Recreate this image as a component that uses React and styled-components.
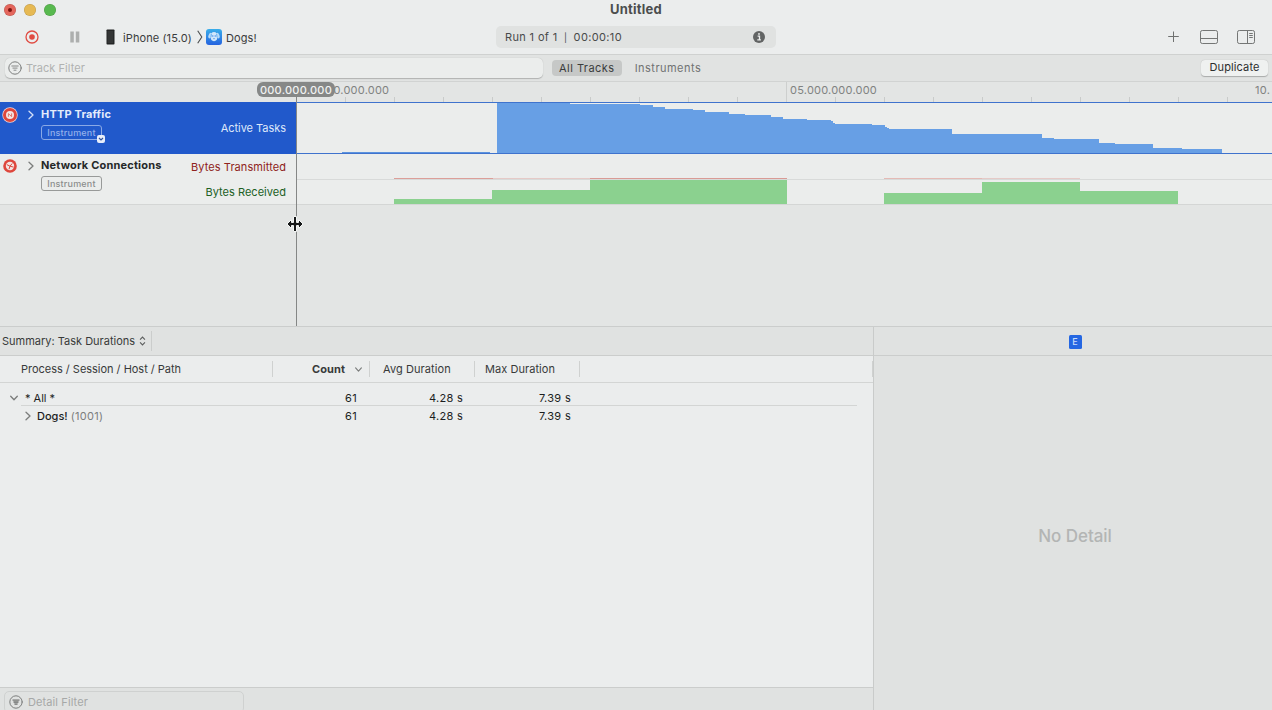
import React from "react";
import styled, { createGlobalStyle, css } from "styled-components";

const Global = createGlobalStyle`
  *, *::before, *::after { box-sizing: border-box; }
  html, body, #root { height: 100%; }
  body {
    margin: 0;
    overflow: hidden;
    font-family: Inter, "Liberation Sans", sans-serif;
    font-size: 11px;
    color: #3c3e3e;
    background: #ebeded;
  }
  svg { display: block; flex: none; }
`;

const Window = styled.div`
  width: 1272px;
  height: 710px;
  display: flex;
  flex-direction: column;
  overflow: hidden;
  white-space: nowrap;
  background: #ebeded;
`;

/* Title bar */
const TitleBar = styled.header`
  height: 20px;
  flex: none;
  display: grid;
  grid-template-columns: 1fr auto 1fr;
  align-items: center;
  padding-left: 4px;
`;
const Lights = styled.div`
  display: flex;
  gap: 8px;
`;
const Light = styled.span`
  width: 12px;
  height: 12px;
  border-radius: 50%;
  background: ${(p) => p.$color};
  box-shadow: inset 0 0 0 0.5px rgba(0, 0, 0, 0.18);
  display: grid;
  place-items: center;
`;
const LightDot = styled.span`
  width: 4px;
  height: 4px;
  border-radius: 50%;
  background: #7c1511;
`;
const Title = styled.h1`
  margin: 0 4px 1px 0;
  font-size: 13px;
  line-height: 17px;
  font-weight: 700;
  letter-spacing: 0.24px;
  color: #4c4e4e;
`;

/* Toolbar */
const Toolbar = styled.div`
  height: 35px;
  flex: none;
  display: flex;
  align-items: center;
  border-bottom: 1px solid #cfd1d0;
  padding: 0 16px 0 25px;
`;
const TransportButtons = styled.div`
  width: 81px;
  display: flex;
  align-items: center;
  gap: 31px;
`;
const Target = styled.div`
  width: 390px;
  display: flex;
  align-items: center;
  font-size: 11px;
  letter-spacing: 0.1px;
  line-height: 16px;
  color: #3a3c3c;
`;
const DeviceName = styled.span`
  width: 74px;
  margin-left: 8px;
  padding-top: 1px;
`;
const AppName = styled.span`
  margin-left: 4px;
  padding-top: 1px;
`;
const RunStatus = styled.div`
  width: 280px;
  height: 22px;
  display: flex;
  align-items: center;
  justify-content: space-between;
  padding: 0 11px 0 9px;
  border-radius: 5px;
  background: #e0e2e1;
  font-size: 11px;
  letter-spacing: 0.36px;
  color: #484a4a;
`;
const RunText = styled.span`
  display: flex;
  align-items: center;
`;
const Pipe = styled.span`
  width: 16px;
  text-align: center;
  font-size: 9px;
`;
const ToolbarActions = styled.div`
  margin-left: auto;
  display: flex;
  align-items: center;
`;
const ActionIcon = styled.span`
  margin-left: ${(p) => p.$gap || 0}px;
`;

/* Filter bar */
const FilterBar = styled.div`
  height: 27px;
  flex: none;
  display: flex;
  align-items: center;
  padding: 0 4px 1px 5px;
  background: #e1e3e2;
  border-bottom: 1px solid #d1d3d2;
`;
const TrackFilter = styled.div`
  width: 538px;
  height: 20px;
  display: flex;
  align-items: center;
  gap: 4px;
  padding-left: 3px;
  border-radius: 5px;
  background: #ebedec;
  box-shadow: 0 0.5px 1px rgba(0, 0, 0, 0.22);
  font-size: 11px;
  letter-spacing: 0.05px;
  color: #b0b2b1;
`;
const ScopeTab = styled.span`
  height: 16px;
  line-height: 16px;
  padding: 0 7px;
  margin-left: ${(p) => p.$gap}px;
  border-radius: 4px;
  font-size: 11px;
  letter-spacing: 0.47px;
  color: #707272;
  ${(p) =>
    p.$active &&
    css`
      background: #c6c8c7;
      color: #3a3c3c;
    `}
`;
const DuplicateButton = styled.span`
  margin-left: auto;
  width: 67px;
  height: 16px;
  line-height: 15px;
  text-align: center;
  border-radius: 4px;
  background: #eff1f0;
  box-shadow: 0 0.5px 1px rgba(0, 0, 0, 0.25);
  font-size: 11px;
  letter-spacing: 0.12px;
  color: #2c2e2e;
`;

/* Timeline */
const Timeline = styled.section`
  position: relative;
  height: 244px;
  flex: none;
  background: #e3e5e4;
`;
const Ruler = styled.div`
  height: 20px;
  display: flex;
  padding-left: 297px;
  overflow: hidden;
`;
const RulerSpan = styled.div`
  width: 490px;
  height: 20px;
  flex: none;
  display: flex;
  flex-direction: column;
  justify-content: space-between;
  border-right: 1px solid #cdcfce;
`;
const RulerLabel = styled.span`
  height: 15px;
  line-height: 16px;
  padding-left: ${(p) => p.$inset}px;
  font-size: 11px;
  letter-spacing: 0.22px;
  color: #808281;
`;
const Ticks = styled.div`
  display: flex;
  height: 5px;
`;
const Tick = styled.i`
  width: 49px;
  height: 5px;
  flex: none;
  border-right: 1px solid #c9cbca;
  &:last-child { border-color: transparent; }
`;
const EndLabel = styled.span`
  position: absolute;
  top: 0;
  left: 1255px;
  line-height: 16px;
  font-size: 11px;
  letter-spacing: 0.32px;
  color: #808281;
`;
const Track = styled.div`
  display: flex;
  height: ${(p) => p.$height}px;
`;
const TrackHead = styled.div`
  width: 296px;
  flex: none;
  display: flex;
  padding-right: 10px;
  background: ${(p) => (p.$selected ? "#2159cb" : "#ebedec")};
  color: ${(p) => (p.$selected ? "#e4ecfb" : "#262828")};
  ${(p) => !p.$selected && "border-bottom: 1px solid #d4d6d5;"}
`;
const Badge = styled.span`
  width: 27px;
  padding: ${(p) => p.$top}px 0 0 2px;
`;
const Names = styled.div`
  display: flex;
  flex-direction: column;
  align-items: flex-start;
  padding-top: ${(p) => p.$top}px;
`;
const TrackName = styled.strong`
  height: 16px;
  line-height: 15px;
  font-size: 11px;
  font-weight: 700;
  letter-spacing: 0.18px;
`;
const NameCell = styled.div`
  width: 14px;
  padding-top: ${(p) => p.$top}px;
`;
const KindTag = styled.span`
  position: relative;
  width: 61px;
  height: 15px;
  line-height: 13px;
  margin-top: 2px;
  text-align: center;
  font-size: 9px;
  font-weight: 500;
  letter-spacing: 0.2px;
  border: 1px solid ${(p) => (p.$selected ? "#8aa9e6" : "#989a99")};
  border-radius: 3px;
  color: ${(p) => (p.$selected ? "#93b0ea" : "#8b8d8c")};
`;
const TagMenu = styled.span`
  position: absolute;
  right: -4px;
  bottom: -4px;
  width: 8px;
  height: 8px;
  border-radius: 2px;
  background: #e8eefa;
`;
const Series = styled.div`
  margin-left: auto;
  display: flex;
  flex-direction: column;
  align-items: flex-end;
`;
const SeriesName = styled.span`
  height: ${(p) => p.$height}px;
  line-height: ${(p) => p.$height}px;
  font-size: 11px;
  letter-spacing: ${(p) => p.$spacing}px;
  color: ${(p) => p.$color};
`;
const Lane = styled.div`
  flex: 1;
  background: #ebedec;
  overflow: hidden;
`;
const Playhead = styled.div`
  position: absolute;
  top: 14px;
  left: 296px;
  width: 1px;
  height: 230px;
  background: #858786;
`;
const PlayheadTime = styled.span`
  position: absolute;
  top: 0;
  left: 257px;
  width: 78px;
  height: 15px;
  line-height: 16px;
  text-align: center;
  border-radius: 6px;
  background: #868887;
  color: #f1f3f2;
  font-size: 11px;
  font-weight: 500;
  letter-spacing: 0.25px;
`;
const ResizeCursor = styled.svg`
  position: absolute;
  top: 133px;
  left: 286px;
`;

/* Lower panes */
const Lower = styled.div`
  flex: 1;
  display: flex;
  min-height: 0;
  border-top: 1px solid #cbcdcc;
`;
const DetailPane = styled.section`
  width: 873px;
  flex: none;
  display: flex;
  flex-direction: column;
`;
const PaneBar = styled.div`
  height: 29px;
  flex: none;
  display: flex;
  align-items: center;
  justify-content: ${(p) => (p.$center ? "center" : "flex-start")};
  background: #e0e2e1;
  border-bottom: 1px solid #cbcdcc;
`;
const SummaryMenu = styled.div`
  width: 152px;
  height: 20px;
  display: flex;
  align-items: center;
  justify-content: space-between;
  padding: 0 5px 0 2px;
  border-right: 1px solid #cbcdcc;
  font-size: 11px;
  color: #383a3a;
`;
const Columns = styled.div`
  display: grid;
  grid-template-columns: 273px 97px 105px 105px 293px;
  align-items: center;
  height: 27px;
  flex: none;
  border-bottom: 1px solid #d3d5d4;
`;
const ColumnHead = styled.div`
  height: 16px;
  display: flex;
  align-items: center;
  justify-content: space-between;
  padding: 0 7px 0 ${(p) => p.$inset}px;
  border-right: 1px solid #cfd1d0;
  font-size: 11px;
  font-weight: ${(p) => (p.$sorted ? 700 : 400)};
  letter-spacing: ${(p) => p.$spacing || 0}px;
  color: #383a3a;
`;
const Rows = styled.div`
  flex: 1;
  padding: 4px 16px 0 9px;
`;
const Row = styled.div`
  display: grid;
  grid-template-columns: 264px 84px 106px 108px 1fr;
  height: 18px;
  padding-top: ${(p) => p.$top}px;
  font-size: 11px;
  color: #1c1e1e;
`;
const RowRule = styled.hr`
  margin: 0 0 0 12px;
  height: 1px;
  border: 0;
  background: #d3d5d4;
`;
const PathCell = styled.div`
  display: flex;
  align-items: center;
  gap: ${(p) => p.$gap}px;
  padding-left: ${(p) => p.$indent}px;
  font-weight: ${(p) => p.$weight || 400};
`;
const Pid = styled.span`
  margin-left: -2px;
  font-weight: 400;
  letter-spacing: 0.3px;
  color: #7c7e7d;
`;
const NumberCell = styled.div`
  text-align: right;
  line-height: 16px;
  letter-spacing: 0.3px;
`;
const DetailFooter = styled.div`
  height: 23px;
  flex: none;
  padding: 3px 0 0 4px;
  border-top: 1px solid #cbcdcc;
  background: #e0e2e1;
`;
const DetailFilter = styled.div`
  width: 240px;
  height: 22px;
  display: flex;
  align-items: center;
  gap: 5px;
  padding-left: 4px;
  border: 1px solid #cfd1d0;
  border-radius: 5px;
  font-size: 11px;
  letter-spacing: 0.1px;
  color: #a6a8a7;
`;
const Inspector = styled.aside`
  flex: 1;
  display: flex;
  flex-direction: column;
  background: #e0e2e1;
  border-left: 1px solid #c9cbca;
`;
const InspectorTab = styled.span`
  width: 13px;
  height: 14px;
  line-height: 14px;
  margin: 2px 0 0 4px;
  text-align: center;
  border-radius: 1.5px;
  background: #2567e2;
  color: #c9dbfa;
  font-size: 9px;
  font-weight: 500;
`;
const EmptyDetail = styled.div`
  flex: 1;
  display: grid;
  place-items: center;
  padding: 6px 0 0 4px;
  font-size: 17px;
  font-weight: 500;
  letter-spacing: -0.05px;
  color: #b3b5b4;
`;

const Chevron = ({ down, size = 8, color = "#7b7d7c", width = 1.3 }) => (
  <svg width={size} height={size + 2} viewBox="0 0 8 10" fill="none" stroke={color} strokeWidth={width} strokeLinecap="round" strokeLinejoin="round">
    <path d={down ? "M0.7 3.2 L4 6.8 L7.3 3.2" : "M2 1.2 L6 5 L2 8.8"} />
  </svg>
);

const FilterIcon = ({ solid }) => (
  <svg width="14" height="14" viewBox="0 0 14 14" fill="none" stroke="#7c7e7d" strokeLinecap="round">
    <circle cx="7" cy="7" r="6.2" strokeWidth="1" />
    {solid && <path d="M3.8 4.7h6.4L8.2 9.7H5.8Z" fill="#a6a8a7" stroke="none" />}
    <path d="M3.8 5h6.4M4.9 7.1h4.2M6 9.2h2" strokeWidth={solid ? 1.1 : 0.9} />
  </svg>
);

const HttpBadge = () => (
  <svg width="16" height="16" viewBox="0 0 16 16">
    <circle cx="8" cy="8" r="7.7" fill="#f3d9d9" />
    <circle cx="8" cy="8" r="7" fill="#de463c" />
    <circle cx="8" cy="8" r="4" fill="#f3e4e2" />
    <path d="M6.4 9.8V6.6l3.200 3V6.400" fill="none" stroke="#de665c" strokeWidth="0.9" />
  </svg>
);

const NetworkBadge = () => (
  <svg width="16" height="16" viewBox="0 0 16 16">
    <circle cx="8" cy="8" r="6.8" fill="#de463c" />
    <circle cx="8" cy="8" r="4.2" fill="#f3e4e2" />
    <path d="M4.8 6.6 8 8.2l2.2-2.7M8 8.2 7 11.2M8 8.2l3.6 0.9" fill="none" stroke="#de463c" strokeWidth="1" />
  </svg>
);

const AppIcon = () => (
  <svg width="16" height="16" viewBox="0 0 16 16">
    <defs>
      <linearGradient id="dogs" x1="0" y1="0" x2="0" y2="1">
        <stop offset="0" stopColor="#3aaeea" />
        <stop offset="1" stopColor="#2563df" />
      </linearGradient>
    </defs>
    <rect width="16" height="16" rx="3" fill="url(#dogs)" />
    <ellipse cx="8" cy="7.600" rx="3.400" ry="4.600" fill="#d2e7fb" />
    <ellipse cx="4.100" cy="6.600" rx="1.600" ry="2.900" transform="rotate(24 4.100 6.600)" fill="#b9dcf9" />
    <ellipse cx="11.900" cy="6.600" rx="1.600" ry="2.900" transform="rotate(-24 11.900 6.600)" fill="#b9dcf9" />
    <path d="M5.400 5 4.900 8.300M10.600 5l0.500 3.300" stroke="#4f9fec" strokeWidth="0.7" />
    <circle cx="6.800" cy="7" r="0.700" fill="#3c86e4" />
    <circle cx="9.200" cy="7" r="0.700" fill="#3c86e4" />
    <path d="M7 9.200h2L8 10.400Z" fill="#3c86e4" />
  </svg>
);

/* Each step is [end x, top y] inside the lane, in pixels. */
const taskSteps = [
  [273, 1], [343, 2], [356, 3], [368, 5], [396, 7], [408, 7.5], [432, 10], [448, 11.7],
  [474, 12.5], [486, 15], [510, 17], [534, 17.6], [536, 19], [537.5, 20.5], [575, 22],
  [588, 22.7], [590, 24.5], [592, 26], [654.5, 27], [745, 32], [757, 36], [802, 37],
  [818, 41], [856, 42], [885, 46], [925.4, 47],
];
const taskPath =
  "M199.6 51V27H200.4V1" + taskSteps.map(([x, y]) => `V${y}H${x}`).join("") + "V51Z";

const received = [
  [97, 98, 45], [195, 98, 36], [293, 197, 26], [587, 98, 39], [685, 98, 28], [783, 98.4, 37],
];
const transmitted = [
  [97, 99, "#dc9f99"], [196, 97, "#e5cac7"], [293, 197, "#d99b95"], [587, 98, "#e4bab5"], [685, 98, "#e5cac7"],
];

const columns = [
  { label: "Process / Session / Host / Path", inset: 21, spacing: -0.02 },
  { label: "Count", inset: 39, sorted: true, spacing: 0.1 },
  { label: "Avg Duration", inset: 13, spacing: 0.08 },
  { label: "Max Duration", inset: 10, spacing: 0.06 },
  { label: "", inset: 0 },
];

export default function App() {
  return (
    <>
      <Global />
      <Window>
        <TitleBar>
          <Lights>
            <Light $color="#e4675d"><LightDot /></Light>
            <Light $color="#e6b953" />
            <Light $color="#58b94f" />
          </Lights>
          <Title>Untitled</Title>
          <span />
        </TitleBar>

        <Toolbar>
          <TransportButtons>
            <svg width="14" height="14" viewBox="0 0 14 14">
              <circle cx="7" cy="7" r="6" fill="none" stroke="#e04b42" strokeWidth="1.3" />
              <circle cx="7" cy="7" r="2.8" fill="#e04b42" />
            </svg>
            <svg width="10" height="12" viewBox="0 0 10 12" fill="#adafae">
              <rect x="0.3" y="0.5" width="3.5" height="11" />
              <rect x="5.8" y="0.5" width="3.5" height="11" />
            </svg>
          </TransportButtons>
          <Target>
            <svg width="9" height="16" viewBox="0 0 9 16">
              <rect x="0.5" y="0.5" width="8" height="15" rx="0.8" fill="#222424" />
              <rect x="1.5" y="1.8" width="5.8" height="12.4" fill="#343636" />
            </svg>
            <DeviceName>iPhone (15.0)</DeviceName>
            <svg width="9" height="14" viewBox="0 0 9 14" fill="none" stroke="#4c4e4e" strokeWidth="1.1">
              <path d="M0.7 0.7 4.8 7 0.7 13.3" />
            </svg>
            <AppIcon />
            <AppName>Dogs!</AppName>
          </Target>
          <RunStatus>
            <RunText>Run 1 of 1<Pipe>|</Pipe>00:00:10</RunText>
            <svg width="12" height="12" viewBox="0 0 12 12">
              <circle cx="6" cy="6" r="6" fill="#626464" />
              <path d="M4.6 5.1h1.9v3.6M4.3 8.8h3.6" fill="none" stroke="#eceeed" strokeWidth="1.3" />
              <circle cx="6" cy="2.9" r="0.95" fill="#eceeed" />
            </svg>
          </RunStatus>
          <ToolbarActions>
            <ActionIcon>
              <svg width="12" height="12" viewBox="0 0 12 12" stroke="#6f7170">
                <path d="M5.5 0.5v10.5M0.200 5.500h10.600" />
              </svg>
            </ActionIcon>
            <ActionIcon $gap={20}>
              <svg width="19" height="15" viewBox="0 0 19 15" fill="none" stroke="#747675">
                <rect x="0.5" y="0.5" width="17" height="13" rx="1.8" />
                <path d="M1 8.500h17" />
              </svg>
            </ActionIcon>
            <ActionIcon $gap={18}>
              <svg width="19" height="15" viewBox="0 0 19 15" fill="none" stroke="#747675">
                <rect x="0.5" y="0.5" width="17" height="13" rx="1.8" />
                <path d="M10.500 1v13" />
                <path d="M12.2 3.500h3.600M12.2 5.500h3.600M12.2 7.500h3.600" />
              </svg>
            </ActionIcon>
          </ToolbarActions>
        </Toolbar>

        <FilterBar>
          <TrackFilter><FilterIcon />Track Filter</TrackFilter>
          <ScopeTab $active $gap={9}>All Tracks</ScopeTab>
          <ScopeTab $gap={6}>Instruments</ScopeTab>
          <DuplicateButton>Duplicate</DuplicateButton>
        </FilterBar>

        <Timeline>
          <Ruler>
            {[["00.000.000.000", 5], ["05.000.000.000", 3]].map(([label, inset]) => (
              <RulerSpan key={label}>
                <RulerLabel $inset={inset}>{label}</RulerLabel>
                <Ticks>{Array.from({ length: 10 }, (_, i) => <Tick key={i} />)}</Ticks>
              </RulerSpan>
            ))}
          </Ruler>
          <EndLabel>10.</EndLabel>

          <Track $height={52}>
            <TrackHead $selected>
              <Badge $top={5}><HttpBadge /></Badge>
              <NameCell $top={8}><Chevron color="#d5e0f8" /></NameCell>
              <Names $top={5}>
                <TrackName>HTTP Traffic</TrackName>
                <KindTag $selected>
                  Instrument
                  <TagMenu>
                    <svg width="8" height="8" viewBox="0 0 8 8" fill="none" stroke="#31549c" strokeWidth="1.2">
                      <path d="M2 3l2 2 2-2" />
                    </svg>
                  </TagMenu>
                </KindTag>
              </Names>
              <Series><SeriesName $height={52} $color="#dfe8fa" $spacing={-0.03}>Active Tasks</SeriesName></Series>
            </TrackHead>
            <Lane>
              <svg width="976" height="52" viewBox="0 0 976 52" shapeRendering="crispEdges">
                <g transform="translate(1 0)">
                  <path d={taskPath} fill="#679fe5" />
                  <rect x="45" y="50" width="148" height="1" fill="#5c93de" />
                  <rect x="-1" width="976" height="1" fill="#3f73cd" />
                  <rect x="-1" y="51" width="976" height="1" fill="#3f73cd" />
                </g>
              </svg>
            </Lane>
          </Track>

          <Track $height={51}>
            <TrackHead>
              <Badge $top={4}><NetworkBadge /></Badge>
              <NameCell $top={7}><Chevron /></NameCell>
              <Names $top={4}>
                <TrackName>Network Connections</TrackName>
                <KindTag>Instrument</KindTag>
              </Names>
              <Series>
                <SeriesName $height={26} $color="#8f2320" $spacing={0.07}>Bytes Transmitted</SeriesName>
                <SeriesName $height={25} $color="#20601f" $spacing={0.03}>Bytes Received</SeriesName>
              </Series>
            </TrackHead>
            <Lane>
              <svg width="976" height="51" viewBox="0 0 976 51" shapeRendering="crispEdges">
                <rect y="25" width="976" height="1" fill="#d8dad9" />
                {transmitted.map(([x, w, fill]) => <rect key={x} x={x + 1} y="24" width={w} height="1" fill={fill} />)}
                {received.map(([x, w, y]) => <rect key={x} x={x + 1} y={y} width={w} height={50 - y} fill="#8bd18f" />)}
                <rect y="50" width="976" height="1" fill="#d4d6d5" />
              </svg>
            </Lane>
          </Track>

          <Playhead />
          <PlayheadTime>000.000.000</PlayheadTime>
          <ResizeCursor width="18" height="18" viewBox="0 0 18 18">
            <path
              d="M7.5 1.5h3v6h2V4.5L17 9l-4.5 4.5v-3h-2v6h-3v-6h-2v3L1 9l4.5-4.5v3h2Z"
              fill="#161818" stroke="#f4f6f5" strokeWidth="1"
            />
          </ResizeCursor>
        </Timeline>

        <Lower>
          <DetailPane>
            <PaneBar>
              <SummaryMenu>
                Summary: Task Durations
                <svg width="7" height="10" viewBox="0 0 6 9" fill="none" stroke="#5c5e5e" strokeWidth="1">
                  <path d="M0.8 3.2 3 1l2.2 2.2M0.8 5.8 3 8l2.2-2.2" />
                </svg>
              </SummaryMenu>
            </PaneBar>
            <Columns>
              {columns.map((c, i) => (
                <ColumnHead key={i} $inset={c.inset} $sorted={c.sorted} $spacing={c.spacing}>
                  {c.label}
                  {c.sorted && <Chevron down size={7} />}
                </ColumnHead>
              ))}
            </Columns>
            <Rows>
              <Row $top={3}>
                <PathCell $indent={1} $gap={7}><Chevron down size={8} />* All *</PathCell>
                <NumberCell>61</NumberCell>
                <NumberCell>4.28 s</NumberCell>
                <NumberCell>7.39 s</NumberCell>
              </Row>
              <RowRule />
              <Row $top={2}>
                <PathCell $indent={15} $gap={5} $weight={500}>
                  <Chevron />Dogs!<Pid>(1001)</Pid>
                </PathCell>
                <NumberCell>61</NumberCell>
                <NumberCell>4.28 s</NumberCell>
                <NumberCell>7.39 s</NumberCell>
              </Row>
            </Rows>
            <DetailFooter>
              <DetailFilter><FilterIcon solid />Detail Filter</DetailFilter>
            </DetailFooter>
          </DetailPane>
          <Inspector>
            <PaneBar $center><InspectorTab>E</InspectorTab></PaneBar>
            <EmptyDetail>No Detail</EmptyDetail>
          </Inspector>
        </Lower>
      </Window>
    </>
  );
}
